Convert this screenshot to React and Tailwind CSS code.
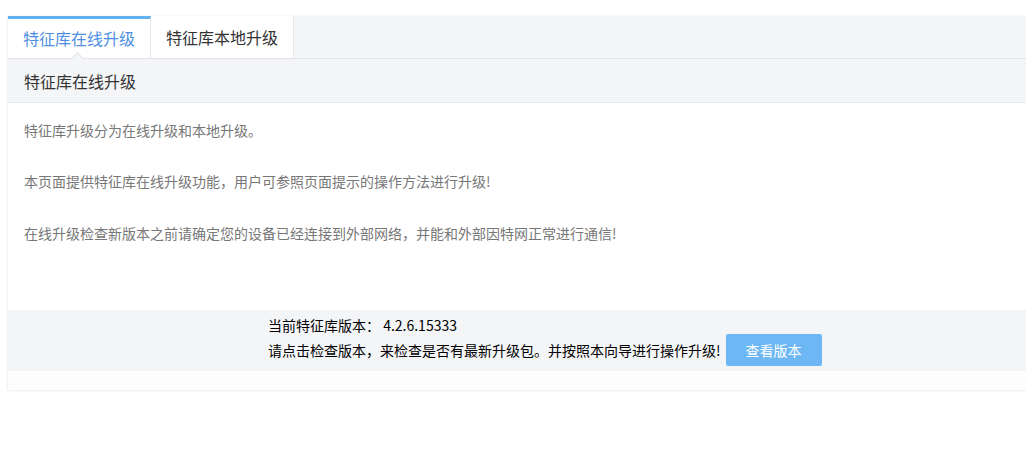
export default function App() {
  return (
    <div className="w-[1026px] h-[474px] bg-white overflow-hidden font-['Noto_Sans_CJK_SC','Noto_Sans',sans-serif]">
      <div className="pl-[8px] pt-[16px]">
        <div className="w-[1040px] shadow-[0_1px_3px_rgba(0,0,0,0.06),-1px_0_2px_rgba(0,0,0,0.04)]">
          {/* Tab bar */}
          <div className="flex h-[43px] bg-[#f4f5f7] border-b border-[#e3e4e8]">
            <div className="relative w-[143px] h-[42px] bg-white border-t-[3px] border-[#62b1f1] border-r border-r-[#e6e7ea] flex items-center justify-center">
              <span className="text-[16px] leading-[20px] text-[#4f8fe3] -mt-[2px]">特征库在线升级</span>
              <div className="absolute left-[65px] bottom-[-5px] w-[9px] h-[9px] rotate-45 bg-[#f4f5f7] border-l border-t border-[#e3e4e8]"></div>
            </div>
            <div className="w-[143px] h-[42px] bg-white border-r border-[#e6e7ea] flex items-center justify-center">
              <span className="text-[16px] leading-[20px] text-[#333]">特征库本地升级</span>
            </div>
          </div>
          {/* Panel header */}
          <div className="h-[44px] bg-[#f4f5f7] border-b border-[#e6e7ea] flex items-center pl-[16px]">
            <span className="text-[16px] leading-[20px] text-[#333]">特征库在线升级</span>
          </div>
          {/* Body */}
          <div className="h-[207px] bg-white pl-[16px] pt-[17px] text-[14px] leading-[20px] text-[#777]">
            <p>特征库升级分为在线升级和本地升级。</p>
            <p className="mt-[31px]">本页面提供特征库在线升级功能，用户可参照页面提示的操作方法进行升级!</p>
            <p className="mt-[32px]">在线升级检查新版本之前请确定您的设备已经连接到外部网络，并能和外部因特网正常进行通信!</p>
          </div>
          {/* Footer */}
          <div className="h-[61px] bg-[#f4f5f7] pl-[260px] pt-[6px] text-[14px] text-[#000]">
            <div className="leading-[18px]">当前特征库版本：&nbsp;4.2.6.15333</div>
            <div className="flex items-center h-[32px]">
              <span className="leading-[20px]">请点击检查版本，来检查是否有最新升级包。并按照本向导进行操作升级!</span>
              <button className="ml-[5px] w-[96px] h-[32px] rounded-[2px] bg-[#6cb7f4] text-white text-[14px] leading-[20px]">查看版本</button>
            </div>
          </div>
          <div className="h-[19px] bg-[#fdfdfd]"></div>
        </div>
      </div>
    </div>
  );
}
